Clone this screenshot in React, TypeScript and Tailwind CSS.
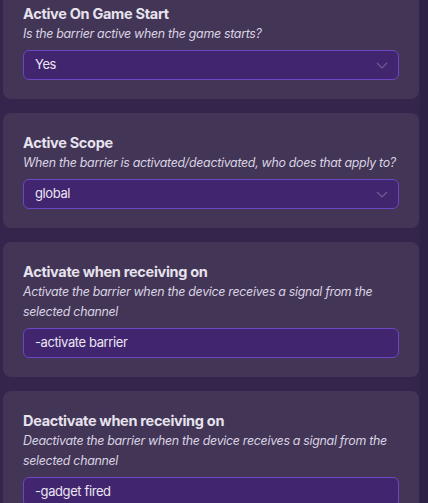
import React from "react";

function Chevron() {
  return (
    <svg width="12" height="7" viewBox="0 0 12 7" fill="none" className="shrink-0">
      <path d="M1 1l5 5 5-5" stroke="#6f5d92" strokeWidth="1.2" />
    </svg>
  );
}

function Card({
  title,
  desc,
  value,
  select,
  first,
}: {
  title: string;
  desc: string;
  value: string;
  select?: boolean;
  first?: boolean;
}) {
  return (
    <div
      className={`rounded-[8px] bg-[#433555] px-[20px] pt-[20px] pb-[19px] ${first ? "-mt-[16px]" : ""}`}
    >
      <div className="text-[14.5px] leading-[20px] font-bold tracking-[-0.3px] text-[#e6e2ee]">{title}</div>
      <div className="-mr-[8px] text-[12.4px] leading-[20px] italic tracking-[-0.3px] text-[#d9d3e3]">{desc}</div>
      <div className="mt-[6px] h-[30px] rounded-[6px] border border-[#6b47c4] bg-[#41256f] pl-[11px] pr-[10px] flex items-center justify-between">
        <span className="text-[13px] tracking-[-0.4px] text-[#ebe6f3]">{value}</span>
        {select ? <Chevron /> : null}
      </div>
    </div>
  );
}

export default function App() {
  return (
    <div
      className="w-[428px] h-[503px] overflow-hidden bg-[#33254c] flex"
      style={{ fontFamily: "Inter, 'Noto Sans', sans-serif" }}
    >
      <div className="w-[420px] pl-[3px] pr-[1px] flex flex-col gap-[14px]">
        <Card
          first
          title="Active On Game Start"
          desc="Is the barrier active when the game starts?"
          value="Yes"
          select
        />
        <Card
          title="Active Scope"
          desc="When the barrier is activated/deactivated, who does that apply to?"
          value="global"
          select
        />
        <Card
          title="Activate when receiving on"
          desc="Activate the barrier when the device receives a signal from the selected channel"
          value="-activate barrier"
        />
        <Card
          title="Deactivate when receiving on"
          desc="Deactivate the barrier when the device receives a signal from the selected channel"
          value="-gadget fired"
        />
      </div>
      <div className="flex-1 bg-[#2e2146]" />
    </div>
  );
}
